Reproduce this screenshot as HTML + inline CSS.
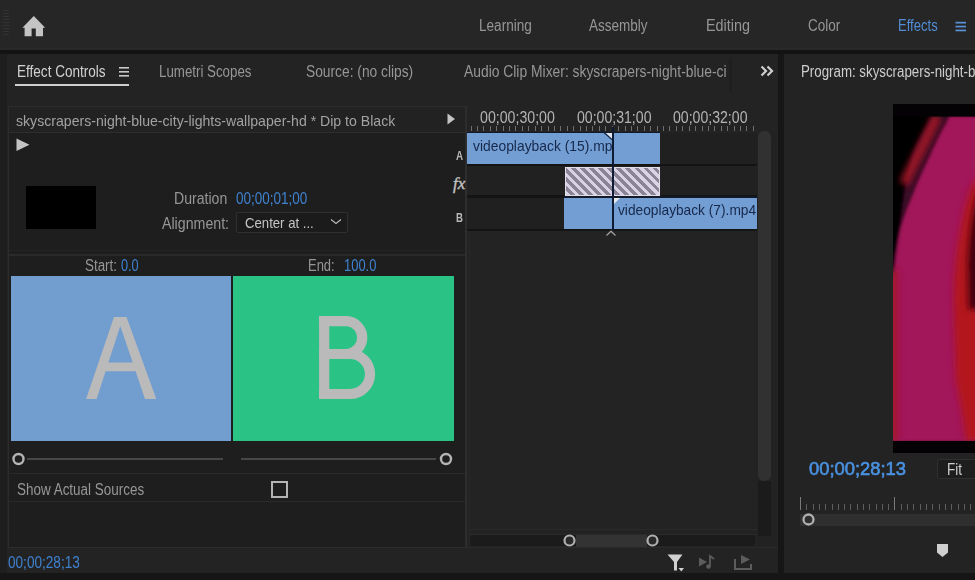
<!DOCTYPE html>
<html><head><meta charset="utf-8"><style>
html,body{margin:0;padding:0;width:975px;height:580px;overflow:hidden;background:#232323}
.r{position:absolute}
.t{position:absolute;white-space:nowrap;font-family:"Liberation Sans",sans-serif;line-height:1;transform-origin:0 0}
</style></head><body>
<div class="r" style="left:0px;top:0px;width:975px;height:50px;background:#262626;"></div>
<div class="r" style="left:0px;top:48px;width:975px;height:2px;background:#292929;"></div>
<svg class="r" style="left:2px;top:9px" width="8" height="30"><rect x="1" y="1" width="6" height="1" fill="#323232"/><rect x="1" y="4" width="6" height="1" fill="#323232"/><rect x="1" y="7" width="6" height="1" fill="#323232"/><rect x="1" y="10" width="6" height="1" fill="#323232"/><rect x="1" y="13" width="6" height="1" fill="#323232"/><rect x="1" y="16" width="6" height="1" fill="#323232"/><rect x="1" y="19" width="6" height="1" fill="#323232"/><rect x="1" y="22" width="6" height="1" fill="#323232"/><rect x="1" y="25" width="6" height="1" fill="#323232"/></svg>
<svg class="r" style="left:20px;top:14px" width="28" height="25" viewBox="20 14 28 25"><path d="M33.8 16 L45.2 27.8 L43 27.8 L43 36.3 L35.8 36.3 L35.8 28.6 L31.6 28.6 L31.6 36.3 L24.6 36.3 L24.6 27.8 L22.4 27.8 Z" fill="#c4c4c4"/></svg>
<div class="t" style="left:478.5px;top:18.0px;font-size:16px;color:#969696;transform:scaleX(0.849);">Learning</div>
<div class="t" style="left:589.0px;top:18.0px;font-size:16px;color:#969696;transform:scaleX(0.845);">Assembly</div>
<div class="t" style="left:705.6px;top:18.0px;font-size:16px;color:#969696;transform:scaleX(0.899);">Editing</div>
<div class="t" style="left:807.7px;top:18.0px;font-size:16px;color:#969696;transform:scaleX(0.844);">Color</div>
<div class="t" style="left:898.0px;top:18.0px;font-size:16px;color:#528cd6;transform:scaleX(0.816);">Effects</div>
<svg class="r" style="left:955px;top:21px" width="12" height="11"><rect x="0.5" y="0.8" width="10.5" height="1.7" fill="#5a92d8"/><rect x="0.5" y="4.7" width="10.5" height="1.7" fill="#5a92d8"/><rect x="0.5" y="8.6" width="10.5" height="1.7" fill="#5a92d8"/></svg>
<div class="r" style="left:0px;top:50px;width:975px;height:4px;background:#131313;"></div>
<div class="r" style="left:0px;top:54px;width:778px;height:519px;background:#232323;"></div>
<div class="r" style="left:0px;top:54px;width:7px;height:519px;background:#1e1e1e;"></div>
<div class="t" style="left:17.3px;top:64.0px;font-size:16px;color:#d2d2d2;transform:scaleX(0.847);">Effect Controls</div>
<svg class="r" style="left:118px;top:66px" width="12" height="12"><rect x="1" y="1" width="10" height="1.6" fill="#c8c8c8"/><rect x="1" y="5" width="10" height="1.6" fill="#c8c8c8"/><rect x="1" y="9" width="10" height="1.6" fill="#c8c8c8"/></svg>
<div class="r" style="left:15px;top:84px;width:114px;height:2px;background:#cfcfcf;"></div>
<div class="t" style="left:158.7px;top:64.0px;font-size:16px;color:#969696;transform:scaleX(0.832);">Lumetri Scopes</div>
<div class="t" style="left:306.0px;top:64.0px;font-size:16px;color:#969696;transform:scaleX(0.861);">Source: (no clips)</div>
<div class="r" style="left:455px;top:55px;width:273px;height:40px;overflow:hidden"><div style="position:absolute;left:-455px;top:-55px"><div class="t" style="left:463.6px;top:64.0px;font-size:16px;color:#969696;transform:scaleX(0.866);">Audio Clip Mixer: skyscrapers-night-blue-ci</div></div></div>
<div class="r" style="left:729px;top:58px;width:3px;height:34px;background:#1f1f1f;"></div>
<svg class="r" style="left:759px;top:64px" width="16" height="14"><path d="M2.5 2.5 L7 7 L2.5 11.5 M8.5 2.5 L13 7 L8.5 11.5" stroke="#cfcfcf" stroke-width="2.2" fill="none"/></svg>
<div class="r" style="left:8px;top:106px;width:458px;height:442px;background:#1e1e1e;box-shadow:inset 0 0 0 1px #2c2c2c;"></div>
<div class="r" style="left:9px;top:107px;width:456px;height:25px;background:#222222;"></div>
<div class="r" style="left:8px;top:132px;width:457px;height:1px;background:#2e2e2e;"></div>
<div class="t" style="left:15.6px;top:113.0px;font-size:15px;color:#a2a2a2;transform:scaleX(0.940);">skyscrapers-night-blue-city-lights-wallpaper-hd * Dip to Black</div>
<svg class="r" style="left:445px;top:112px" width="12" height="14"><path d="M2.5 1.5 L10 7 L2.5 12.5Z" fill="#c4c4c4"/></svg>
<svg class="r" style="left:15px;top:137px" width="16" height="16"><path d="M1.5 1.5 L14.5 7.8 L1.5 14Z" fill="#c4c4c4"/></svg>
<div class="r" style="left:26px;top:186px;width:70px;height:43px;background:#000;"></div>
<div class="t" style="left:174.4px;top:191.0px;font-size:16px;color:#969696;transform:scaleX(0.881);">Duration</div>
<div class="t" style="left:235.9px;top:191.0px;font-size:16px;color:#3f82d0;transform:scaleX(0.844);">00;00;01;00</div>
<div class="t" style="left:161.6px;top:216.0px;font-size:16px;color:#969696;transform:scaleX(0.887);">Alignment:</div>
<div class="r" style="left:236px;top:212px;width:112px;height:21px;background:#1b1b1b;box-shadow:inset 0 0 0 1px #303030;border-radius:2px;"></div>
<div class="t" style="left:245.0px;top:215.0px;font-size:15px;color:#c6c6c6;transform:scaleX(0.877);">Center at ...</div>
<svg class="r" style="left:330px;top:217px" width="13" height="9"><path d="M1 2.5 L6 6.5 L11 2.5" stroke="#bdbdbd" stroke-width="1.1" fill="none"/></svg>
<div class="r" style="left:9px;top:250px;width:456px;height:1px;background:#242424;"></div>
<div class="r" style="left:9px;top:254px;width:456px;height:2px;background:#2a2a2a;"></div>
<div class="t" style="left:85.0px;top:258.0px;font-size:16px;color:#969696;transform:scaleX(0.836);">Start:</div>
<div class="t" style="left:120.6px;top:258.0px;font-size:16px;color:#3f82d0;transform:scaleX(0.795);">0.0</div>
<div class="t" style="left:307.7px;top:258.0px;font-size:16px;color:#969696;transform:scaleX(0.811);">End:</div>
<div class="t" style="left:343.6px;top:258.0px;font-size:16px;color:#3f82d0;transform:scaleX(0.808);">100.0</div>
<div class="r" style="left:11px;top:276px;width:220px;height:165px;background:#729dcf;"></div>
<div class="r" style="left:233px;top:276px;width:221px;height:165px;background:#2bc285;"></div>
<svg class="r" style="left:0;top:0" width="466" height="441"><path fill-rule="evenodd" fill="#bababa" d="M114 317 L126.5 317 L156.3 399 L145 399 L135.6 371.2 L105.6 371.2 L96.6 399 L86.1 399 Z M120.3 326 L132.7 362.6 L108.4 362.6 Z"/><path fill="none" stroke="#bababa" stroke-width="10.2" d="M324.2 399 L324.2 316 M319 321.1 L347 321.1 A16.5 16.5 0 0 1 347 354 L319 354 M324 354 L350 354 A20 20 0 0 1 350 394 L319 394"/></svg>
<div class="r" style="left:27px;top:458px;width:196px;height:2px;background:#474747;"></div>
<div class="r" style="left:241px;top:458px;width:195px;height:2px;background:#474747;"></div>
<svg class="r" style="left:10px;top:451px" width="16" height="16"><circle cx="8.5" cy="8" r="5" stroke="#b4b4b4" stroke-width="2.4" fill="#1e1e1e"/></svg>
<svg class="r" style="left:438px;top:451px" width="16" height="16"><circle cx="8" cy="8" r="5" stroke="#b4b4b4" stroke-width="2.4" fill="#1e1e1e"/></svg>
<div class="r" style="left:8px;top:473px;width:457px;height:1px;background:#2a2a2a;"></div>
<div class="t" style="left:16.7px;top:482.0px;font-size:16px;color:#969696;transform:scaleX(0.841);">Show Actual Sources</div>
<svg class="r" style="left:270px;top:480px" width="20" height="20"><rect x="2" y="2" width="15" height="15" stroke="#b4b4b4" stroke-width="2" fill="none"/></svg>
<div class="r" style="left:8px;top:501px;width:457px;height:1px;background:#2a2a2a;"></div>
<div class="t" style="left:8.2px;top:555.0px;font-size:16px;color:#3f82d0;transform:scaleX(0.849);">00;00;28;13</div>
<div class="r" style="left:466px;top:106px;width:1px;height:442px;background:#2e2e2e;"></div>
<div class="t" style="left:479.8px;top:110.0px;font-size:16px;color:#b4b4b4;transform:scaleX(0.886);">00;00;30;00</div>
<div class="t" style="left:576.9px;top:110.0px;font-size:16px;color:#b4b4b4;transform:scaleX(0.881);">00;00;31;00</div>
<div class="t" style="left:672.8px;top:110.0px;font-size:16px;color:#b4b4b4;transform:scaleX(0.881);">00;00;32;00</div>
<svg class="r" style="left:467px;top:126px" width="290" height="6"><rect x="4" y="0" width="1" height="5" fill="#6e6e6e"/><rect x="10" y="0" width="1" height="5" fill="#6e6e6e"/><rect x="16" y="0" width="1" height="5" fill="#6e6e6e"/><rect x="23" y="0" width="1" height="5" fill="#6e6e6e"/><rect x="29" y="0" width="1" height="5" fill="#6e6e6e"/><rect x="36" y="0" width="1" height="5" fill="#6e6e6e"/><rect x="42" y="0" width="1" height="5" fill="#6e6e6e"/><rect x="48" y="0" width="1" height="5" fill="#6e6e6e"/><rect x="55" y="0" width="1" height="5" fill="#6e6e6e"/><rect x="61" y="0" width="1" height="5" fill="#6e6e6e"/><rect x="68" y="0" width="1" height="5" fill="#6e6e6e"/><rect x="74" y="0" width="1" height="5" fill="#6e6e6e"/><rect x="81" y="0" width="1" height="5" fill="#6e6e6e"/><rect x="87" y="0" width="1" height="5" fill="#6e6e6e"/><rect x="93" y="0" width="1" height="5" fill="#6e6e6e"/><rect x="100" y="0" width="1" height="5" fill="#6e6e6e"/><rect x="106" y="0" width="1" height="5" fill="#6e6e6e"/><rect x="113" y="0" width="1" height="5" fill="#6e6e6e"/><rect x="119" y="0" width="1" height="5" fill="#6e6e6e"/><rect x="125" y="0" width="1" height="5" fill="#6e6e6e"/><rect x="132" y="0" width="1" height="5" fill="#6e6e6e"/><rect x="138" y="0" width="1" height="5" fill="#6e6e6e"/><rect x="145" y="0" width="1" height="5" fill="#6e6e6e"/><rect x="151" y="0" width="1" height="5" fill="#6e6e6e"/><rect x="158" y="0" width="1" height="5" fill="#6e6e6e"/><rect x="164" y="0" width="1" height="5" fill="#6e6e6e"/><rect x="170" y="0" width="1" height="5" fill="#6e6e6e"/><rect x="177" y="0" width="1" height="5" fill="#6e6e6e"/><rect x="183" y="0" width="1" height="5" fill="#6e6e6e"/><rect x="190" y="0" width="1" height="5" fill="#6e6e6e"/><rect x="196" y="0" width="1" height="5" fill="#6e6e6e"/><rect x="202" y="0" width="1" height="5" fill="#6e6e6e"/><rect x="209" y="0" width="1" height="5" fill="#6e6e6e"/><rect x="215" y="0" width="1" height="5" fill="#6e6e6e"/><rect x="222" y="0" width="1" height="5" fill="#6e6e6e"/><rect x="228" y="0" width="1" height="5" fill="#6e6e6e"/><rect x="235" y="0" width="1" height="5" fill="#6e6e6e"/><rect x="241" y="0" width="1" height="5" fill="#6e6e6e"/><rect x="247" y="0" width="1" height="5" fill="#6e6e6e"/><rect x="254" y="0" width="1" height="5" fill="#6e6e6e"/><rect x="260" y="0" width="1" height="5" fill="#6e6e6e"/><rect x="267" y="0" width="1" height="5" fill="#6e6e6e"/><rect x="273" y="0" width="1" height="5" fill="#6e6e6e"/><rect x="279" y="0" width="1" height="5" fill="#6e6e6e"/><rect x="286" y="0" width="1" height="5" fill="#6e6e6e"/></svg>
<div class="r" style="left:467px;top:133px;width:290px;height:31px;background:#202020;"></div>
<div class="r" style="left:467px;top:164px;width:290px;height:2px;background:#141414;"></div>
<div class="r" style="left:467px;top:166px;width:290px;height:29px;background:#212121;"></div>
<div class="r" style="left:467px;top:195px;width:290px;height:2.5px;background:#141414;"></div>
<div class="r" style="left:467px;top:197.5px;width:290px;height:31.5px;background:#202020;"></div>
<div class="r" style="left:467px;top:229px;width:290px;height:1.5px;background:#141414;"></div>
<div class="t" style="left:455.5px;top:150.0px;font-size:12px;color:#b8b8b8;transform:scaleX(0.819);font-weight:bold;">A</div>
<div class="t" style="left:455.8px;top:212.0px;font-size:12px;color:#b8b8b8;transform:scaleX(0.807);font-weight:bold;">B</div>
<div class="t" style="left:453px;top:175px;font:italic 17px/1 'Liberation Serif';color:#c0c0c0;-webkit-text-stroke:0.4px #c0c0c0">fx</div>
<div class="r" style="left:467px;top:131.5px;width:193px;height:1.5px;background:#121a2a;"></div>
<div class="r" style="left:564px;top:196px;width:193px;height:2px;background:#121a2a;"></div>
<div class="r" style="left:467px;top:133px;width:145px;height:30.599999999999994px;background:#729ed4;"></div>
<div class="r" style="left:614px;top:133px;width:46px;height:30.599999999999994px;background:#729ed4;"></div>
<svg class="r" style="left:600px;top:130px" width="12" height="10"><path d="M6 3 L12 3 L12 9Z" fill="#dfe6f0"/><path d="M1 0 L12 9.5" stroke="#10203a" stroke-width="1.1"/></svg>
<div class="r" style="left:467px;top:133px;width:145px;height:31px;overflow:hidden"><div style="position:absolute;left:-467px;top:-133px"><div class="t" style="left:473.2px;top:138.0px;font-size:15px;color:#17284a;transform:scaleX(0.924);">videoplayback (15).mp4</div></div></div>
<div class="r" style="left:564.5px;top:166.8px;width:95.5px;height:29px;box-sizing:border-box;border:1px solid #e0dce8;background:repeating-linear-gradient(45deg,#d9d2e4 0 3.2px,#8b8496 3.2px 6.4px);"></div>
<div class="r" style="left:564px;top:198px;width:48px;height:30.80000000000001px;background:#729ed4;"></div>
<div class="r" style="left:614px;top:198px;width:143px;height:30.80000000000001px;background:#729ed4;"></div>
<svg class="r" style="left:614px;top:198px" width="7" height="6"><path d="M0 0 L6 0 L0 6Z" fill="#e8e8e8"/></svg>
<div class="r" style="left:614px;top:198px;width:143px;height:31px;overflow:hidden"><div style="position:absolute;left:-614px;top:-198px"><div class="t" style="left:618.0px;top:202.0px;font-size:15px;color:#17284a;transform:scaleX(0.915);">videoplayback (7).mp4</div></div></div>
<div class="r" style="left:612px;top:127px;width:2px;height:103.5px;background:#0e1b33;"></div>
<svg class="r" style="left:604px;top:229px" width="14" height="9"><path d="M2.5 6.5 L7 2.2 L11.5 6.5" stroke="#a0a0a0" stroke-width="1.2" fill="none"/></svg>
<div class="r" style="left:757px;top:133px;width:20px;height:415px;background:#222222;"></div>
<div class="r" style="left:758px;top:481px;width:13px;height:55px;background:#1b1b1b;"></div>
<div class="r" style="left:758px;top:131px;width:13px;height:350px;background:#313131;border-radius:6px"></div>
<div class="r" style="left:469px;top:231px;width:1px;height:316px;background:#282828;"></div>
<div class="r" style="left:470px;top:529px;width:287px;height:1px;background:#2a2a2a;"></div>
<div class="r" style="left:470px;top:534px;width:287px;height:1px;background:#2a2a2a;"></div>
<div class="r" style="left:470px;top:535px;width:285px;height:11px;background:#1b1b1b;border-radius:3px"></div>
<div class="r" style="left:466px;top:547px;width:312px;height:1px;background:#2a2a2a;"></div>
<div class="r" style="left:576px;top:535px;width:71px;height:11.5px;background:#333333;"></div>
<svg class="r" style="left:562px;top:533px" width="16" height="16"><circle cx="7.5" cy="7.5" r="5" stroke="#b0b0b0" stroke-width="2.2" fill="#2a2a2a"/></svg>
<svg class="r" style="left:645px;top:533px" width="16" height="16"><circle cx="7.5" cy="7.5" r="5" stroke="#b0b0b0" stroke-width="2.2" fill="#2a2a2a"/></svg>
<svg class="r" style="left:666px;top:553px" width="20" height="20"><path d="M1.5 1.5 L16.5 1.5 L11 9 L11 17.5 L8 17.5 L8 9 Z" fill="#d0d0d0"/><path d="M12.5 15 L18 15 L15.25 18.5Z" fill="#d0d0d0"/></svg>
<svg class="r" style="left:698px;top:554px" width="22" height="16"><path d="M1 3.5 L9 8 L1 12.5Z" fill="#5c5c5c"/><path d="M12 12 L12 2 L16 5" stroke="#5c5c5c" stroke-width="1.8" fill="none"/><circle cx="10.5" cy="12.5" r="2.3" fill="#5c5c5c"/></svg>
<svg class="r" style="left:733px;top:553px" width="21" height="18"><path d="M2 6 L2 16 L18 16 L18 11" stroke="#5c5c5c" stroke-width="2" fill="none"/><path d="M8 2 L17 6.5 L8 11Z" fill="#5c5c5c"/></svg>
<div class="r" style="left:778px;top:54px;width:6px;height:519px;background:#161616;"></div>
<div class="r" style="left:784px;top:54px;width:191px;height:519px;background:#232323;"></div>
<div class="t" style="left:800.5px;top:64.0px;font-size:16px;color:#cdcdcd;transform:scaleX(0.831);">Program: skyscrapers-night-blue-city</div>
<svg class="r" style="left:893px;top:104px" width="82" height="349" viewBox="893 104 82 349">
<defs><filter id="bl" x="-30%" y="-10%" width="160%" height="120%"><feGaussianBlur stdDeviation="1.6"/></filter>
<filter id="bl2" x="-50%" y="-10%" width="200%" height="120%"><feGaussianBlur stdDeviation="3"/></filter></defs>
<rect x="893" y="104" width="82" height="349" fill="#040204"/>
<g filter="url(#bl)">
<rect x="888" y="116" width="92" height="326" fill="#a2145a"/>
<path d="M888 116 L950 116 C947 122 944 128 941 133 C937 141 934 147 931 154 C925 167 918 181 913 195 C908 206 904 217 901 228 C898 240 896 255 894 275 L888 285 Z" fill="#3a0828"/>
<path d="M888 116 L933 116 C926 128 918 142 913 155 C909 168 906 182 904 195 C902 210 900 225 898 240 C896 252 894 265 893 278 L888 278 Z" fill="#060306"/>
</g>
<path filter="url(#bl2)" d="M937 116 C932 127 927 137 921 149 C915 161 910 170 904 184" stroke="#a81828" stroke-width="10" fill="none" opacity="0.85"/>
<g filter="url(#bl2)">
<path d="M975 180 C962 205 954 260 954 300 L956 380 C960 400 964 420 966 441 L980 441 L980 180Z" fill="#b3141e"/>
<path d="M980 185 C972 205 968 235 967 265 L968 310 L980 310Z" fill="#3e0610"/>
<rect x="889" y="270" width="9" height="171" fill="#a3142e"/>
</g>
<rect x="893" y="441" width="82" height="12" fill="#040204"/>
<rect x="893" y="104" width="82" height="12.5" fill="#040204"/>
</svg>
<div class="t" style="left:808.5px;top:460.0px;font-size:18px;color:#4a92e2;transform:scaleX(1.020);-webkit-text-stroke:0.6px #4a92e2;">00;00;28;13</div>
<div class="r" style="left:937px;top:459px;width:50px;height:20px;background:#1e1e1e;box-shadow:inset 0 0 0 1px #2f2f2f;border-radius:2px"></div>
<div class="t" style="left:946.5px;top:462.0px;font-size:16px;color:#cfcfcf;transform:scaleX(0.843);">Fit</div>
<svg class="r" style="left:800px;top:497px" width="175" height="14"><rect x="0" y="0" width="1" height="13" fill="#7a7a7a"/><rect x="6" y="7" width="1" height="6" fill="#5e5e5e"/><rect x="13" y="7" width="1" height="6" fill="#5e5e5e"/><rect x="19" y="7" width="1" height="6" fill="#5e5e5e"/><rect x="25" y="7" width="1" height="6" fill="#5e5e5e"/><rect x="32" y="7" width="1" height="6" fill="#5e5e5e"/><rect x="38" y="7" width="1" height="6" fill="#5e5e5e"/><rect x="44" y="7" width="1" height="6" fill="#5e5e5e"/><rect x="50" y="7" width="1" height="6" fill="#5e5e5e"/><rect x="57" y="7" width="1" height="6" fill="#5e5e5e"/><rect x="63" y="7" width="1" height="6" fill="#5e5e5e"/><rect x="69" y="7" width="1" height="6" fill="#5e5e5e"/><rect x="76" y="7" width="1" height="6" fill="#5e5e5e"/><rect x="82" y="7" width="1" height="6" fill="#5e5e5e"/><rect x="88" y="7" width="1" height="6" fill="#5e5e5e"/><rect x="94" y="0" width="1" height="13" fill="#7a7a7a"/><rect x="101" y="7" width="1" height="6" fill="#5e5e5e"/><rect x="107" y="7" width="1" height="6" fill="#5e5e5e"/><rect x="113" y="7" width="1" height="6" fill="#5e5e5e"/><rect x="120" y="7" width="1" height="6" fill="#5e5e5e"/><rect x="126" y="7" width="1" height="6" fill="#5e5e5e"/><rect x="132" y="7" width="1" height="6" fill="#5e5e5e"/><rect x="139" y="7" width="1" height="6" fill="#5e5e5e"/><rect x="145" y="7" width="1" height="6" fill="#5e5e5e"/><rect x="151" y="7" width="1" height="6" fill="#5e5e5e"/><rect x="158" y="7" width="1" height="6" fill="#5e5e5e"/><rect x="164" y="7" width="1" height="6" fill="#5e5e5e"/><rect x="170" y="7" width="1" height="6" fill="#5e5e5e"/><rect x="176" y="7" width="1" height="6" fill="#5e5e5e"/><rect x="183" y="7" width="1" height="6" fill="#5e5e5e"/></svg>
<div class="r" style="left:800px;top:514px;width:175px;height:12px;background:#2f2f2f;"></div>
<svg class="r" style="left:801px;top:512px" width="16" height="16"><circle cx="7.5" cy="7.5" r="5" stroke="#b0b0b0" stroke-width="2.3" fill="#2f2f2f"/></svg>
<svg class="r" style="left:936px;top:543px" width="13" height="15"><path d="M1 1 L12 1 L12 9.5 L6.5 14 L1 9.5Z" fill="#cfcfcf"/></svg>
<div class="r" style="left:0px;top:573px;width:975px;height:7px;background:#161616;"></div>
</body></html>
